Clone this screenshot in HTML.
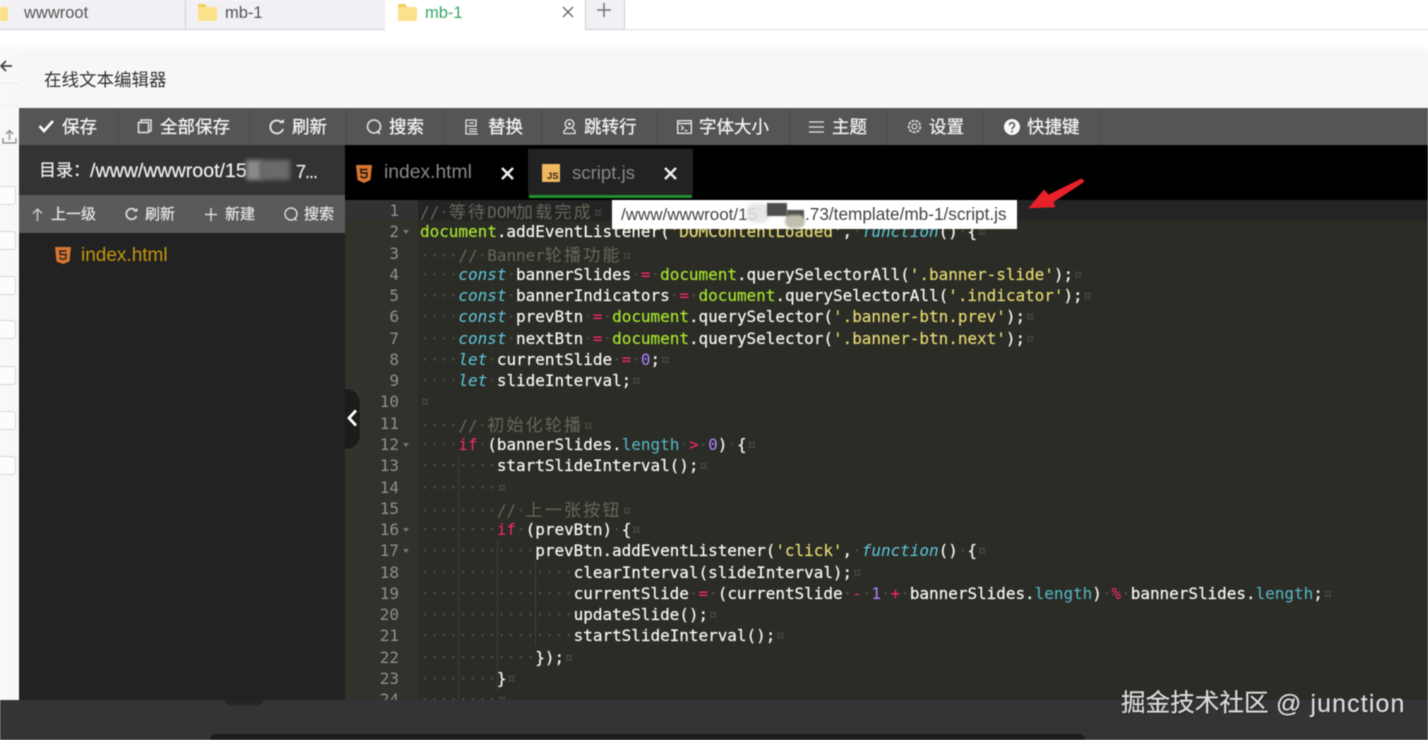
<!DOCTYPE html>
<html><head><meta charset="utf-8"><style>
html,body{margin:0;padding:0;width:1428px;height:740px;overflow:hidden;background:#fff}
#r{position:absolute;left:0;top:0;width:1428px;height:740px;overflow:hidden;font-family:"Liberation Sans","Noto Sans CJK SC",sans-serif;filter:blur(.5px)}
.a{position:absolute}
.t{position:absolute;white-space:nowrap;line-height:1}
.tb{color:#f2f2f2;font-size:17.5px;top:119px;-webkit-text-stroke:.3px #f2f2f2}
.sb{color:#e4e4e4;font-size:15px;top:207px;-webkit-text-stroke:.25px #e4e4e4}
.sep{position:absolute;top:108px;width:1px;height:37px;background:#4c4c4c}
svg{position:absolute;overflow:visible}
#code{position:absolute;left:345px;top:200px;width:1083px;height:500px;overflow:hidden;background:#2b2c26}
#gut{position:absolute;left:0;top:0;width:73px;height:500px;background:#30322b}
.l{position:absolute;left:75px;white-space:pre;font:16px/21.27px "DejaVu Sans Mono","Noto Sans CJK SC",monospace;letter-spacing:-.03px;color:#4d4e45;height:21.27px}
.n{position:absolute;left:0;width:54px;text-align:right;font:16px/21.27px "DejaVu Sans Mono",monospace;color:#8f908a}
.f{position:absolute;left:58px;width:0;height:0;border-left:3.5px solid transparent;border-right:3.5px solid transparent;border-top:4px solid #777}
.g{position:absolute;width:1px;background:#3e3f38}
.w{color:#f8f8f2;-webkit-text-stroke:.2px #f8f8f2}.m{color:#66675a}.u{color:#a6e22e;-webkit-text-stroke:.2px #a6e22e}.k{color:#f92672}.c{color:#5ec8dc;font-style:italic}.y{color:#e6db74;-webkit-text-stroke:.15px #e6db74}.p{color:#ae81ff}.b{color:#56b9c9}
.z{font-size:17px;letter-spacing:2.2px;font-family:"Noto Sans CJK SC",sans-serif}
.box{position:absolute;left:-4px;width:18px;height:17px;border:1px solid #d8d8d8;border-radius:3px;background:#fcfcfc}
</style></head><body><div id="r">

<!-- browser tabs -->
<div class="a" style="left:0;top:0;width:1428px;height:30px;background:#fff"></div>
<div class="a" style="left:0;top:0;width:385px;height:29px;background:#f1f1f5;border-bottom:1px solid #cfcfd3"></div>
<div class="a" style="left:185px;top:0;width:1px;height:30px;background:#cfcfd3"></div>
<div class="a" style="left:585px;top:0;width:38px;height:29px;background:#f1f1f5;border-left:1px solid #cfcfd3;border-right:1px solid #cfcfd3;border-bottom:1px solid #cfcfd3"></div>
<div class="a" style="left:624px;top:29px;width:804px;height:1px;background:#dedee0"></div>
<svg style="left:-12px;top:3px" width="20" height="19"><path d="M1 1h7l2 3h9a1 1 0 0 1 1 1v12a1 1 0 0 1-1 1H1z" fill="#fbe28a"/><path d="M1 1h7l2 3H1z" fill="#f3cf5c"/></svg>
<svg style="left:197px;top:3px" width="20" height="19"><path d="M1 1h7l2 3h9a1 1 0 0 1 1 1v12a1 1 0 0 1-1 1H1z" fill="#fbe28a"/><path d="M1 1h7l2 3H1z" fill="#f3cf5c"/></svg>
<svg style="left:397px;top:3px" width="20" height="19"><path d="M1 1h7l2 3h9a1 1 0 0 1 1 1v12a1 1 0 0 1-1 1H1z" fill="#fbe28a"/><path d="M1 1h7l2 3H1z" fill="#f3cf5c"/></svg>
<div class="t" style="left:24px;top:5px;font-size:16.5px;color:#555">wwwroot</div>
<div class="t" style="left:225px;top:5px;font-size:16.5px;color:#555">mb-1</div>
<div class="t" style="left:425px;top:5px;font-size:16.5px;color:#35a862">mb-1</div>
<svg style="left:562px;top:6px" width="12" height="12"><path d="M1 1l10 10M11 1L1 11" stroke="#666" stroke-width="1.300" fill="none"/></svg>
<svg style="left:597px;top:3px" width="14" height="14"><path d="M7 0v14M0 7h14" stroke="#777" stroke-width="1.600" fill="none"/></svg>

<!-- page behind -->
<div class="a" style="left:0;top:47px;width:915px;height:1px;background:#efefef"></div>
<div class="a" style="left:0;top:48px;width:19px;height:652px;background:#f8f8f8"></div>
<div class="a" style="left:19px;top:50px;width:1409px;height:58px;background:#f7f7f7"></div>
<div class="a" style="left:0;top:47px;width:1428px;height:3px;background:#fafafa"></div>
<svg style="left:0;top:59px" width="13" height="14"><path d="M12 7H1M6 2L1 7l5 5" stroke="#444" stroke-width="1.800" fill="none"/></svg>
<svg style="left:2px;top:129px" width="15" height="16"><path d="M7.500 11V2M4 5l3.500-3.500L11 5M1 9v5h13V9" stroke="#888" stroke-width="1.300" fill="none"/></svg>
<div class="box" style="top:186px"></div><div class="box" style="top:231px"></div><div class="box" style="top:276px"></div><div class="box" style="top:320px"></div><div class="box" style="top:366px"></div><div class="box" style="top:411px"></div><div class="box" style="top:456px"></div>
<div class="a" style="left:0;top:83px;width:19px;height:1px;background:#e8e8e8"></div>
<div class="a" style="left:0;top:105px;width:19px;height:1px;background:#e8e8e8"></div>
<div class="t" style="left:44px;top:72px;font-size:17.5px;color:#333">在线文本编辑器</div>

<!-- toolbar -->
<div class="a" style="left:19px;top:108px;width:1409px;height:37px;background:#555"></div>
<div class="sep" style="left:118px"></div><div class="sep" style="left:249px"></div><div class="sep" style="left:346px"></div><div class="sep" style="left:444px"></div><div class="sep" style="left:541px"></div><div class="sep" style="left:656px"></div><div class="sep" style="left:789px"></div><div class="sep" style="left:887px"></div><div class="sep" style="left:983px"></div><div class="sep" style="left:1099px"></div>
<svg style="left:38px;top:119px" width="16" height="14"><path d="M1.500 7l4.500 5L15 2" stroke="#fff" stroke-width="2.600" fill="none"/></svg>
<div class="t tb" style="left:62px">保存</div>
<svg style="left:137px;top:119px" width="15" height="15"><path d="M4 3V1h10v11h-2M1.500 3.500h10v10h-10z" stroke="#e4e4e4" stroke-width="1.500" fill="none"/></svg>
<div class="t tb" style="left:160px">全部保存</div>
<svg style="left:269px;top:119px" width="16" height="16"><path d="M13 4A6.500 6.500 0 1 0 14 10" stroke="#e4e4e4" stroke-width="1.900" fill="none"/><path d="M10 4h5V0z" fill="#e4e4e4"/></svg>
<div class="t tb" style="left:292px">刷新</div>
<svg style="left:366px;top:119px" width="17" height="17"><circle cx="8" cy="7.500" r="6.500" stroke="#e4e4e4" stroke-width="1.600" fill="none"/><path d="M11 12l3 3" stroke="#e4e4e4" stroke-width="1.600"/></svg>
<div class="t tb" style="left:389px">搜索</div>
<svg style="left:465px;top:119px" width="15" height="16"><path d="M1 1h10v6H1zM1 7v8h12M4 4h5M4 10h8M4 12.500h8" stroke="#e4e4e4" stroke-width="1.300" fill="none"/></svg>
<div class="t tb" style="left:488px">替换</div>
<svg style="left:562px;top:119px" width="15" height="16"><circle cx="7.500" cy="5" r="4.300" stroke="#e4e4e4" stroke-width="1.400" fill="none"/><circle cx="7.500" cy="5" r="1.500" fill="#e4e4e4"/><path d="M5 9l-3 3v2.500h11V12l-3-3" stroke="#e4e4e4" stroke-width="1.300" fill="none"/></svg>
<div class="t tb" style="left:584px">跳转行</div>
<svg style="left:677px;top:120px" width="15" height="14"><path d="M.7.700h13.600v12.600H.7z" stroke="#e4e4e4" stroke-width="1.400" fill="none"/><path d="M1 3.500h13" stroke="#e4e4e4" stroke-width="1.500"/><path d="M4 6l2.500 2L4 10M7.500 10.500h3" stroke="#e4e4e4" stroke-width="1.200" fill="none"/></svg>
<div class="t tb" style="left:699px">字体大小</div>
<svg style="left:809px;top:121px" width="15" height="12"><path d="M0 1h15M0 6h15M0 11h15" stroke="#d4d4d4" stroke-width="1.600"/></svg>
<div class="t tb" style="left:832px">主题</div>
<svg style="left:907px;top:119px" width="15" height="15"><circle cx="7.500" cy="7.500" r="5.800" stroke="#ccc" stroke-width="2" stroke-dasharray="3 1" fill="none"/><circle cx="7.500" cy="7.500" r="2.500" stroke="#ddd" stroke-width="1.200" fill="none"/></svg>
<div class="t tb" style="left:929px">设置</div>
<svg style="left:1004px;top:119px" width="16" height="16"><circle cx="8" cy="8" r="8" fill="#f8f8f8"/><path d="M5.500 6.200a2.500 2.500 0 1 1 3.800 2.100c-.9.600-1.300 1-1.300 1.900M8 11.500v2" stroke="#555" stroke-width="1.500" fill="none"/></svg>
<div class="t tb" style="left:1027px">快捷键</div>

<!-- sidebar -->
<div class="a" style="left:19px;top:145px;width:326px;height:555px;background:#222"></div>
<div class="a" style="left:19px;top:145px;width:326px;height:50px;background:#333"></div>
<div class="a" style="left:19px;top:195px;width:326px;height:38px;background:#5a5a5a"></div>
<div class="t" style="left:39px;top:162px;font-size:17px;color:#f0f0f0;-webkit-text-stroke:.2px #f0f0f0">目录：</div>
<div class="t" style="left:90px;top:162px;font-size:19.600px;color:#f0f0f0;-webkit-text-stroke:.2px #f0f0f0">/www/wwwroot/15</div>
<div class="a" style="left:246px;top:160px;width:16px;height:20px;background:#8a8a8a;filter:blur(2px)"></div>
<div class="a" style="left:260px;top:160px;width:30px;height:20px;background:#6a6a6a;filter:blur(2px)"></div>
<div class="t" style="left:296px;top:163px;font-size:18px;letter-spacing:-1px;color:#f0f0f0;-webkit-text-stroke:.2px #f0f0f0">7...</div>
<svg style="left:32px;top:208px" width="11" height="13"><path d="M5.500 13V1M1 5.500l4.500-4.500 4.500 4.500" stroke="#ccc" stroke-width="1.400" fill="none"/></svg>
<div class="t sb" style="left:51px">上一级</div>
<svg style="left:125px;top:208px" width="13" height="13"><path d="M11 3A5.300 5.300 0 1 0 11.500 8" stroke="#ddd" stroke-width="1.700" fill="none"/><path d="M8 3.500h4.500V0z" fill="#ddd"/></svg>
<div class="t sb" style="left:145px">刷新</div>
<svg style="left:205px;top:208px" width="12" height="13"><path d="M6 0v13M0 6.500h12" stroke="#ddd" stroke-width="1.400"/></svg>
<div class="t sb" style="left:225px">新建</div>
<svg style="left:284px;top:207px" width="14" height="14"><circle cx="7" cy="7" r="6" stroke="#ddd" stroke-width="1.400" fill="none"/><path d="M10 11l2.500 2.500" stroke="#ddd" stroke-width="1.400"/></svg>
<div class="t sb" style="left:304px">搜索</div>
<svg style="left:55px;top:247px" width="16" height="17"><path d="M0 0h16l-1.500 14.500L8 17l-6.500-2.500z" fill="#d8762f"/><path d="M11.500 4H4.800l.3 3.500h6l-.4 4L8 12.500l-2.800-1-.1-1.500" stroke="#222" stroke-width="1.400" fill="none"/></svg>
<div class="t" style="left:81px;top:246px;font-size:19px;color:#c3960f">index.html</div>

<!-- editor tabs -->
<div class="a" style="left:345px;top:145px;width:1083px;height:55px;background:#000"></div>
<div class="a" style="left:528px;top:149px;width:165px;height:46px;background:#222"></div>
<div class="a" style="left:529px;top:195px;width:163px;height:2.500px;background:#1f9130"></div>
<svg style="left:356px;top:165px" width="16" height="18"><path d="M0 0h16l-1.500 15L8 18l-6.500-3z" fill="#d8762f"/><path d="M11.500 4.500H4.800l.3 3.500h6l-.4 4L8 13l-2.800-1-.1-1.500" stroke="#111" stroke-width="1.400" fill="none"/></svg>
<div class="t" style="left:384px;top:163px;font-size:19.300px;color:#888">index.html</div>
<svg style="left:501px;top:167px" width="13" height="13"><path d="M1 1l11 11M12 1L1 12" stroke="#f2f2f2" stroke-width="2.400"/></svg>
<div class="a" style="left:542px;top:164px;width:18px;height:18px;background:#f1b862;border-radius:1px"></div>
<div class="t" style="left:547px;top:172px;font-size:9.500px;font-weight:bold;color:#3a2a10">JS</div>
<div class="t" style="left:572px;top:164px;font-size:18.600px;color:#888">script.js</div>
<svg style="left:664px;top:167px" width="13" height="13"><path d="M1 1l11 11M12 1L1 12" stroke="#f2f2f2" stroke-width="2.400"/></svg>

<!-- code -->
<div id="code">
<div id="gut"></div>
<div class="a" style="left:0;top:0;width:73px;height:21px;background:#323232"></div>
<div class="a" style="left:73px;top:0;width:1010px;height:21px;background:#242424"></div>
<div class="g" style="left:113px;top:255px;height:245px"></div>
<div class="g" style="left:152px;top:340px;height:150px"></div>
<div class="g" style="left:190px;top:361px;height:85px"></div>

<div class="n" style="top:0">1</div><div class="n" style="top:21.270px">2</div><div class="n" style="top:42.540px">3</div><div class="n" style="top:63.810px">4</div><div class="n" style="top:85.080px">5</div><div class="n" style="top:106.350px">6</div><div class="n" style="top:127.620px">7</div><div class="n" style="top:148.890px">8</div><div class="n" style="top:170.160px">9</div><div class="n" style="top:191.430px">10</div><div class="n" style="top:212.700px">11</div><div class="n" style="top:233.970px">12</div><div class="n" style="top:255.240px">13</div><div class="n" style="top:276.510px">14</div><div class="n" style="top:297.780px">15</div><div class="n" style="top:319.050px">16</div><div class="n" style="top:340.320px">17</div><div class="n" style="top:361.590px">18</div><div class="n" style="top:382.860px">19</div><div class="n" style="top:404.130px">20</div><div class="n" style="top:425.400px">21</div><div class="n" style="top:446.670px">22</div><div class="n" style="top:467.940px">23</div><div class="n" style="top:489.210px">24</div>
<div class="f" style="top:30px"></div><div class="f" style="top:243px"></div><div class="f" style="top:328px"></div><div class="f" style="top:349px"></div>

<div class="l" style="top:0"><span class="m">//</span>·<span class="m z">等待</span><span class="m">DOM</span><span class="m z">加载完成</span>¤</div>
<div class="l" style="top:21.270px"><span class="u">document</span><span class="w">.addEventListener(</span><span class="y">'DOMContentLoaded'</span><span class="w">,</span>·<span class="c">function</span><span class="w">()</span>·<span class="w">{</span>¤</div>
<div class="l" style="top:42.540px">····<span class="m">//</span>·<span class="m">Banner</span><span class="m z">轮播功能</span>¤</div>
<div class="l" style="top:63.810px">····<span class="c">const</span>·<span class="w">bannerSlides</span>·<span class="k">=</span>·<span class="u">document</span><span class="w">.querySelectorAll(</span><span class="y">'.banner-slide'</span><span class="w">);</span>¤</div>
<div class="l" style="top:85.080px">····<span class="c">const</span>·<span class="w">bannerIndicators</span>·<span class="k">=</span>·<span class="u">document</span><span class="w">.querySelectorAll(</span><span class="y">'.indicator'</span><span class="w">);</span>¤</div>
<div class="l" style="top:106.350px">····<span class="c">const</span>·<span class="w">prevBtn</span>·<span class="k">=</span>·<span class="u">document</span><span class="w">.querySelector(</span><span class="y">'.banner-btn.prev'</span><span class="w">);</span>¤</div>
<div class="l" style="top:127.620px">····<span class="c">const</span>·<span class="w">nextBtn</span>·<span class="k">=</span>·<span class="u">document</span><span class="w">.querySelector(</span><span class="y">'.banner-btn.next'</span><span class="w">);</span>¤</div>
<div class="l" style="top:148.890px">····<span class="c">let</span>·<span class="w">currentSlide</span>·<span class="k">=</span>·<span class="p">0</span><span class="w">;</span>¤</div>
<div class="l" style="top:170.160px">····<span class="c">let</span>·<span class="w">slideInterval;</span>¤</div>
<div class="l" style="top:191.430px">¤</div>
<div class="l" style="top:212.700px">····<span class="m">//</span>·<span class="m z">初始化轮播</span>¤</div>
<div class="l" style="top:233.970px">····<span class="k">if</span>·<span class="w">(bannerSlides.</span><span class="b">length</span>·<span class="k">&gt;</span>·<span class="p">0</span><span class="w">)</span>·<span class="w">{</span>¤</div>
<div class="l" style="top:255.240px">········<span class="w">startSlideInterval();</span>¤</div>
<div class="l" style="top:276.510px">········¤</div>
<div class="l" style="top:297.780px">········<span class="m">//</span>·<span class="m z">上一张按钮</span>¤</div>
<div class="l" style="top:319.050px">········<span class="k">if</span>·<span class="w">(prevBtn)</span>·<span class="w">{</span>¤</div>
<div class="l" style="top:340.320px">············<span class="w">prevBtn.addEventListener(</span><span class="y">'click'</span><span class="w">,</span>·<span class="c">function</span><span class="w">()</span>·<span class="w">{</span>¤</div>
<div class="l" style="top:361.590px">················<span class="w">clearInterval(slideInterval);</span>¤</div>
<div class="l" style="top:382.860px">················<span class="w">currentSlide</span>·<span class="k">=</span>·<span class="w">(currentSlide</span>·<span class="k">-</span>·<span class="p">1</span>·<span class="k">+</span>·<span class="w">bannerSlides.</span><span class="b">length</span><span class="w">)</span>·<span class="k">%</span>·<span class="w">bannerSlides.</span><span class="b">length</span><span class="w">;</span>¤</div>
<div class="l" style="top:404.130px">················<span class="w">updateSlide();</span>¤</div>
<div class="l" style="top:425.400px">················<span class="w">startSlideInterval();</span>¤</div>
<div class="l" style="top:446.670px">············<span class="w">});</span>¤</div>
<div class="l" style="top:467.940px">········<span class="w">}</span>¤</div>
<div class="l" style="top:489.210px">········¤</div>
</div>

<!-- collapse handle -->
<div class="a" style="left:345px;top:388px;width:15px;height:60px;background:#1c1c1a;border:1px solid #3c3c38;border-left:none;border-radius:0 14px 14px 0"></div>
<svg style="left:347px;top:409px" width="11" height="18"><path d="M9 1.500L2 9l7 7.500" stroke="#fff" stroke-width="2.800" fill="none"/></svg>

<!-- tooltip -->
<div class="a" style="left:612px;top:200px;width:405px;height:29px;background:#fff"></div>
<div class="t" style="left:621px;top:206px;font-size:17px;color:#444">/www/wwwroot/15</div>
<div class="t" style="left:805px;top:206px;font-size:17.200px;color:#444">.73/template/mb-1/script.js</div>
<div class="a" style="left:746px;top:203px;width:24px;height:20px;background:#e4e4e2;border-radius:9px;filter:blur(1.500px);opacity:.9"></div>
<div class="a" style="left:767px;top:203px;width:20px;height:13px;background:#4c4c4c;filter:blur(.6px)"></div>
<div class="a" style="left:787px;top:210px;width:17px;height:10px;background:#4f4f4f;filter:blur(.6px)"></div>
<div class="a" style="left:785px;top:215px;width:20px;height:13px;background:#c0bfae;border-radius:7px;filter:blur(1px)"></div>

<!-- red arrow -->
<svg style="left:1028px;top:176px" width="58" height="36"><path d="M1 32L16 14 20.500 19 53 3Q56 3 55.500 6L25 26 27 31z" fill="#e8212b" stroke="#e8212b" stroke-width=".6" stroke-linejoin="round"/></svg>

<!-- bottom overlay -->
<div class="a" style="left:0;top:700px;width:1428px;height:40px;background:#333436"></div>
<div class="a" style="left:225px;top:700px;width:38px;height:5px;background:#252525;border-radius:0 0 8px 8px"></div>
<div class="a" style="left:210px;top:734px;width:875px;height:10px;background:#1f1a1b;border-radius:6px 6px 0 0"></div>
<div class="t" style="left:1121px;top:692px;font-size:24.600px;color:#dcdcdc;text-shadow:1px 1px 1px #222;-webkit-text-stroke:.2px #dcdcdc">掘金技术社区</div>
<div class="t" style="left:1276px;top:692px;font-size:25px;letter-spacing:1.100px;color:#dcdcdc;text-shadow:1px 1px 1px #222;-webkit-text-stroke:.2px #dcdcdc">@ junction</div>

</div></body></html>
